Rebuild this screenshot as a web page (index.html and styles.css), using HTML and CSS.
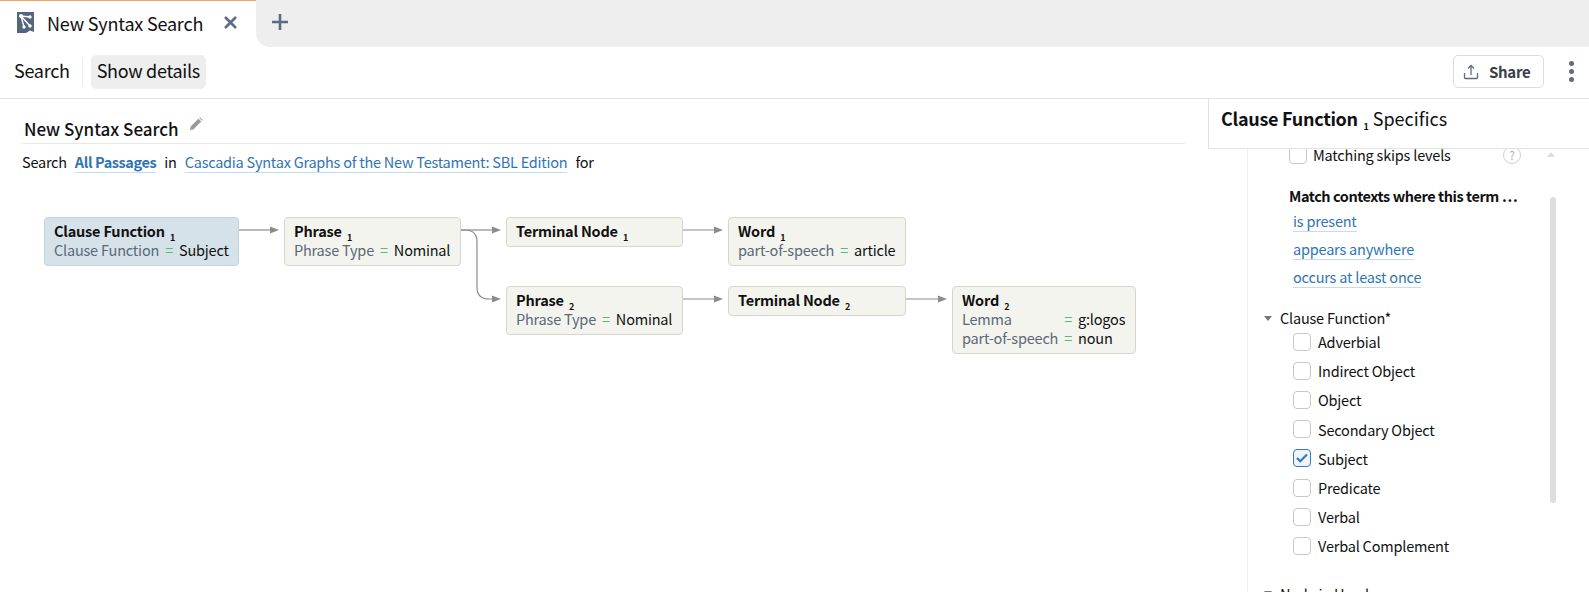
FILE: index.html
```html
<!DOCTYPE html>
<html lang="en">
<head>
    <meta charset="UTF-8">
    <meta name="viewport" content="width=device-width, initial-scale=1.0">
    <title>New Syntax Search</title>
    <link rel="stylesheet" href="styles.css">
</head>
<body>
    <div class="tabbar">
        <div class="tab">
            <svg class="tab-icon" width="17" height="21" viewBox="0 0 17 21">
                <path d="M0 0h17v20l-4-1.5L9 21H0z" fill="#56657f"/>
                <path d="M4 4l9 1M4 4l3 11M4 4l9 10" stroke="#fff" stroke-width="1.4" fill="none"/>
                <circle cx="4" cy="4" r="2" fill="#fff"/>
                <circle cx="13" cy="5" r="1.7" fill="#fff"/>
                <circle cx="7" cy="15" r="1.7" fill="#fff"/>
                <circle cx="13" cy="14" r="1.7" fill="#fff"/>
            </svg>
            <span class="tab-title">New Syntax Search</span>
            <svg class="tab-close" width="13" height="13" viewBox="0 0 13 13">
                <path d="M1 1l11 11M12 1L1 12" stroke="#5d6b84" stroke-width="2.6" fill="none"/>
            </svg>
        </div>
        <div class="tab-rest">
            <svg class="tab-add" width="18" height="18" viewBox="0 0 18 18">
                <path d="M9 1v16M1 9h16" stroke="#5d6b84" stroke-width="2.6" fill="none"/>
            </svg>
        </div>
    </div>

    <div class="toolbar">
        <span class="tool">Search</span>
        <span class="tool-sep"></span>
        <span class="tool tool-active">Show details</span>
        <span class="spacer"></span>
        <button class="share">
            <svg width="16" height="16" viewBox="0 0 16 16">
                <path d="M8 11V2M5 4.5L8 1.5l3 3M1.5 9v4.5a1 1 0 0 0 1 1h11a1 1 0 0 0 1-1V9" stroke="#5d6b84" stroke-width="1.3" fill="none"/>
            </svg>
            <span>Share</span>
        </button>
        <span class="kebab"><i></i><i></i><i></i></span>
    </div>

    <div class="main">
        <div class="content">
            <div class="search-title">
                <span>New Syntax Search</span>
                <svg width="14" height="14" viewBox="0 0 14 14">
                    <path d="M1 13l.6-3.4L9.4 1.8l2.8 2.8L4.4 12.4zM10.2 1l.8-.6 2.6 2.6-.6.8z" fill="#9a9a9a"/>
                </svg>
            </div>
            <div class="search-line">
                Search <a class="link link-bold">All Passages</a> in
                <a class="link">Cascadia Syntax Graphs of the New Testament: SBL Edition</a> for
            </div>

            <div class="graph">
                <svg class="edges" width="1120" height="200" viewBox="0 0 1120 200">
                    <g stroke="#8c8c8c" stroke-width="1.2" fill="none">
                        <path d="M217 13h32"/>
                        <path d="M439 13h32"/>
                        <path d="M439 13h4q12 0 12 12v45q0 12 12 12h4"/>
                        <path d="M661 13h33"/>
                        <path d="M661 82h33"/>
                        <path d="M884 82h33"/>
                    </g>
                    <g fill="#8c8c8c">
                        <path d="M248 9.5l9 3.5-9 3.5z"/>
                        <path d="M470 9.5l9 3.5-9 3.5z"/>
                        <path d="M470 78.5l9 3.5-9 3.5z"/>
                        <path d="M692 9.5l9 3.5-9 3.5z"/>
                        <path d="M692 78.5l9 3.5-9 3.5z"/>
                        <path d="M916 78.5l9 3.5-9 3.5z"/>
                    </g>
                </svg>

                <div class="node node-selected node-clause">
                    <div class="node-name">Clause Function <sub>1</sub></div>
                    <div class="node-rows">
                        <span class="key">Clause Function</span><span class="eq">=</span><span>Subject</span>
                    </div>
                </div>
                <div class="node node-phrase1">
                    <div class="node-name">Phrase <sub>1</sub></div>
                    <div class="node-rows">
                        <span class="key">Phrase Type</span><span class="eq">=</span><span>Nominal</span>
                    </div>
                </div>
                <div class="node node-term1">
                    <div class="node-name">Terminal Node <sub>1</sub></div>
                </div>
                <div class="node node-word1">
                    <div class="node-name">Word <sub>1</sub></div>
                    <div class="node-rows">
                        <span class="key">part-of-speech</span><span class="eq">=</span><span>article</span>
                    </div>
                </div>
                <div class="node node-phrase2">
                    <div class="node-name">Phrase <sub>2</sub></div>
                    <div class="node-rows">
                        <span class="key">Phrase Type</span><span class="eq">=</span><span>Nominal</span>
                    </div>
                </div>
                <div class="node node-term2">
                    <div class="node-name">Terminal Node <sub>2</sub></div>
                </div>
                <div class="node node-word2">
                    <div class="node-name">Word <sub>2</sub></div>
                    <div class="node-rows">
                        <span class="key">Lemma</span><span class="eq">=</span><span>g:logos</span>
                        <span class="key">part-of-speech</span><span class="eq">=</span><span>noun</span>
                    </div>
                </div>
            </div>
        </div>

        <div class="specifics">
            <div class="specifics-head"><b>Clause Function <sub>1</sub></b> Specifics</div>
            <div class="specifics-body">
                <div class="skip-row">
                    <span class="check"></span>
                    <span class="skip-label">Matching skips levels</span>
                    <span class="help">?</span>
                    <span class="scroll-up"></span>
                </div>
                <div class="scrollbar"></div>

                <div class="match-head">Match contexts where this term …</div>
                <div class="match-link"><a class="link">is present</a></div>
                <div class="match-link"><a class="link">appears anywhere</a></div>
                <div class="match-link"><a class="link">occurs at least once</a></div>

                <div class="group-head"><span class="caret"></span>Clause Function*</div>
                <ul class="options">
                    <li><span class="check"></span>Adverbial</li>
                    <li><span class="check"></span>Indirect Object</li>
                    <li><span class="check"></span>Object</li>
                    <li><span class="check"></span>Secondary Object</li>
                    <li>
                        <span class="check check-on">
                            <svg width="14" height="14" viewBox="0 0 14 14"><path d="M2 7l3.2 3.2L12 3.5" stroke="#2f78c4" stroke-width="2.2" fill="none"/></svg>
                        </span>Subject
                    </li>
                    <li><span class="check"></span>Predicate</li>
                    <li><span class="check"></span>Verbal</li>
                    <li><span class="check"></span>Verbal Complement</li>
                </ul>
                <div class="group-head group-next"><span class="caret"></span>Node in Head</div>
            </div>
        </div>
    </div>
</body>
</html>
```

FILE: styles.css
```css
html, body {
    margin: 0;
    height: 100%;
    overflow: hidden;
}
body {
    font-family: "Noto Sans CJK JP", "Noto Sans", sans-serif;
    font-size: 14.5px;
    letter-spacing: -0.2px;
    color: #111;
    background: white;
    display: flex;
    flex-direction: column;
}
sub {
    font-size: 9px;
    font-weight: 700;
    vertical-align: -4px;
    line-height: 0;
    margin-left: 2px;
}

/* tabs */
.tabbar {
    height: 47px;
    flex: none;
    display: flex;
}
.tab {
    width: 256px;
    height: 47px;
    flex: none;
    box-sizing: border-box;
    border-top: 1px solid #f0a766;
    background: white;
    display: flex;
    align-items: center;
    padding: 0 0 3px 17px;
}
.tab-icon {
    flex: none;
}
.tab-title {
    font-size: 18px;
    letter-spacing: -0.2px;
    margin-left: 13px;
    width: 177px;
    white-space: nowrap;
}
.tab-rest {
    flex: 1;
    background: #eeeeee;
    border-bottom-left-radius: 14px;
}
.tab-add {
    margin: 13px 0 0 15px;
}

.toolbar {
    height: 52px;
    flex: none;
    box-sizing: border-box;
    border-bottom: 1px solid #e2e2e2;
    background: white;
    display: flex;
    align-items: center;
    padding: 0 0 2px 0;
}
.tool {
    font-size: 18px;
    letter-spacing: -0.3px;
    padding: 0 6px;
    height: 34px;
    line-height: 31px;
    border-radius: 5px;
    white-space: nowrap;
}
.tool:first-child {
    margin-left: 8px;
}
.tool-sep {
    width: 1px;
    height: 28px;
    background: #eeeeee;
    margin: 0 8px 0 6px;
}
.tool-active {
    background: #eeeeee;
}
.spacer {
    flex: 1;
}
.share {
    width: 91px;
    height: 33px;
    box-sizing: border-box;
    border: 1px solid #dcdcdc;
    border-radius: 5px;
    background: white;
    font: 700 15px "Noto Sans CJK JP", "Noto Sans", sans-serif;
    letter-spacing: -0.3px;
    color: #3a3f47;
    display: flex;
    align-items: center;
    gap: 10px;
    padding: 0 0 0 9px;
}
.kebab {
    display: flex;
    flex-direction: column;
    gap: 3px;
    margin: 0 15px 0 25px;
}
.kebab i {
    width: 5px;
    height: 5px;
    border-radius: 50%;
    background: #5f6b7c;
}

/* main area */
.main {
    flex: 1;
    display: flex;
    min-height: 0;
}
.content {
    flex: 1;
    padding: 0 0 0 22px;
    min-width: 0;
}
.search-title {
    width: 1163px;
    height: 45px;
    box-sizing: border-box;
    border-bottom: 1px solid #e8e8e8;
    font-size: 17px;
    letter-spacing: 0;
    font-weight: 500;
    padding: 16px 0 0 2px;
    display: flex;
    align-items: flex-start;
    gap: 10px;
    line-height: 27px;
}
.search-title svg {
    margin-top: 2px;
}
.search-line {
    line-height: 22px;
    margin-top: 7px;
    letter-spacing: -0.24px;
}
.link {
    color: #2f74b5;
    border-bottom: 1px solid #c4dcf2;
    margin: 0 5px;
}
.link-bold {
    font-weight: 700;
    letter-spacing: -0.4px;
}

/* diagram */
.graph {
    position: relative;
    height: 200px;
    margin-top: 44px;
}
.edges {
    position: absolute;
    left: 0;
    top: 0;
}
.node {
    position: absolute;
    box-sizing: border-box;
    border: 1px solid #d6d6cf;
    border-radius: 4px;
    background: #f3f4ee;
    padding: 3px 9px;
    line-height: 19px;
    white-space: nowrap;
}
.node-selected {
    background: #d5e2ea;
    border-color: #c4d2da;
}
.node-name {
    font-weight: 700;
}
.node-rows {
    display: grid;
    grid-template-columns: auto auto 1fr;
}
.key {
    color: #5c6878;
}
.eq {
    color: #5fb87a;
    margin: 0 6px;
}
.node-clause { left: 22px; top: 0; width: 195px; height: 49px; }
.node-phrase1 { left: 262px; top: 0; width: 177px; height: 49px; }
.node-term1 { left: 484px; top: 0; width: 177px; height: 30px; }
.node-word1 { left: 706px; top: 0; width: 178px; height: 49px; }
.node-phrase2 { left: 484px; top: 69px; width: 177px; height: 49px; }
.node-term2 { left: 706px; top: 69px; width: 178px; height: 30px; }
.node-word2 { left: 930px; top: 69px; width: 184px; height: 68px; }

/* specifics panel */
.specifics {
    width: 381px;
    flex: none;
    position: relative;
    overflow: hidden;
}
.specifics-head {
    height: 50px;
    box-sizing: border-box;
    border-left: 1px solid #e2e2e2;
    border-bottom: 1px solid #e2e2e2;
    padding-left: 12px;
    font-size: 18px;
    letter-spacing: 0;
    line-height: 39px;
    background: white;
    position: relative;
    z-index: 1;
}
.specifics-head b {
    letter-spacing: -0.3px;
}
.specifics-body {
    margin-left: 39px;
    border-left: 1px solid #eeeeee;
    height: 500px;
    padding-left: 41px;
    position: relative;
}
.skip-row {
    display: flex;
    align-items: center;
    height: 17px;
    margin-top: -3px;
    line-height: 17px;
}
.skip-label {
    width: 190px;
    white-space: nowrap;
}
.check {
    width: 16px;
    height: 16px;
    flex: none;
    border: 1px solid #c8c8c8;
    border-radius: 4px;
    background: white;
    display: inline-flex;
    align-items: center;
    justify-content: center;
    margin-right: 6px;
}
.check-on {
    border-color: #2f78c4;
    background: #eef4fa;
}
.options .check {
    margin-right: 7px;
}
.help {
    width: 16px;
    height: 16px;
    border: 1px solid #cfcfcf;
    border-radius: 50%;
    font-size: 12px;
    line-height: 16px;
    text-align: center;
    color: #b0b0b0;
}
.scroll-up {
    width: 0;
    height: 0;
    border: 4px solid transparent;
    border-top: 0;
    border-bottom: 5px solid #dddddd;
    margin-left: 26px;
}
.scrollbar {
    position: absolute;
    left: 302px;
    top: 51px;
    width: 6px;
    height: 306px;
    border-radius: 3px;
    background: #dddddd;
}
.match-head {
    font-weight: 700;
    letter-spacing: -0.45px;
    margin-top: 22px;
    line-height: 22px;
    white-space: nowrap;
}
.match-link {
    line-height: 20px;
    margin-top: 8px;
    margin-left: -1px;
}
.match-link:nth-child(4) {
    margin-top: 4px;
}
.group-head {
    margin: 20px 0 0 -9px;
    line-height: 22px;
    display: flex;
    align-items: center;
}
.caret {
    width: 0;
    height: 0;
    border: 4px solid transparent;
    border-bottom: 0;
    border-top: 5px solid #777777;
    margin-right: 8px;
    margin-left: -16px;
}
.options {
    list-style: none;
    margin: -2px 0 0;
    padding: 0 0 0 4px;
}
.options li {
    height: 29.2px;
    display: flex;
    align-items: center;
}
.group-next {
    margin-top: 22px;
}
```
